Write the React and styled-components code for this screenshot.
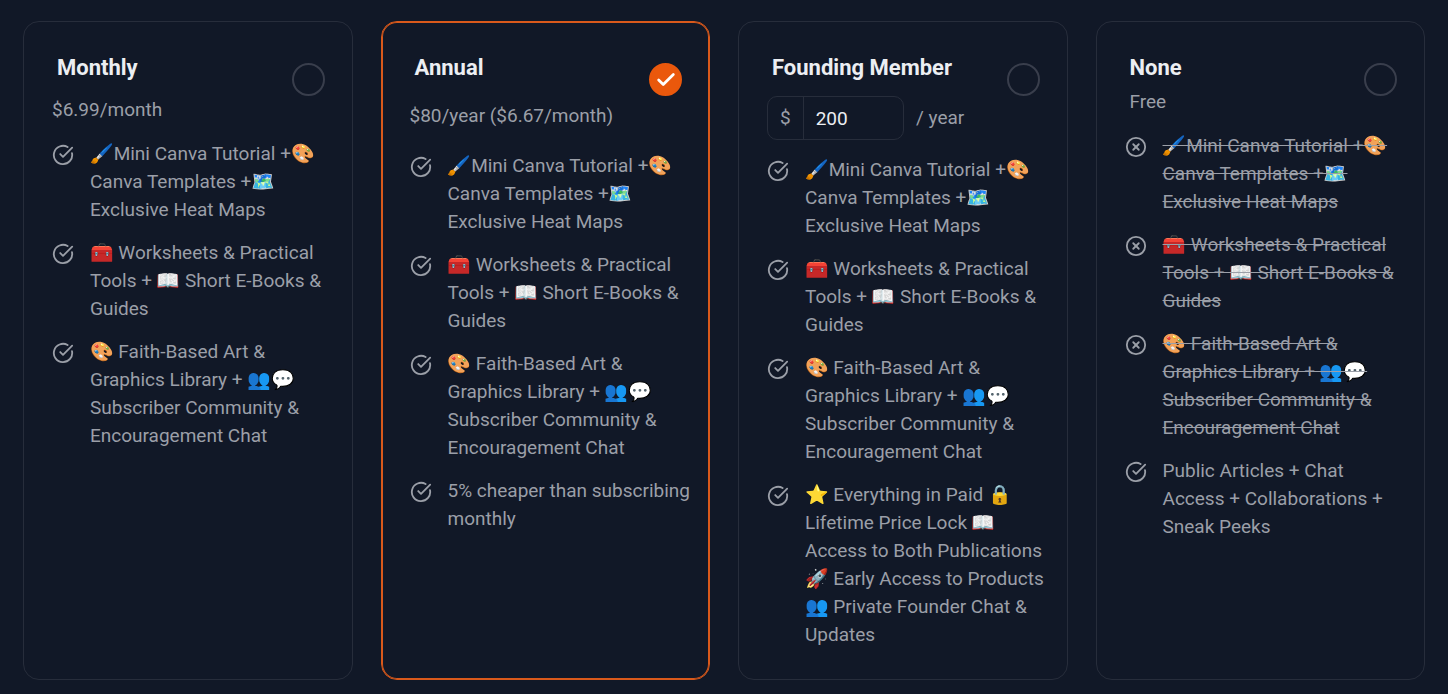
import React, { useState } from "react";
import styled, { createGlobalStyle } from "styled-components";
import { Check, CircleCheckBig, CircleX } from "lucide-react";

const SHARED = [
  "🖌️Mini Canva Tutorial +🎨 Canva Templates +🗺️ Exclusive Heat Maps",
  "🧰 Worksheets & Practical Tools + 📖 Short E-Books & Guides",
  "🎨 Faith-Based Art & Graphics Library + 👥💬 Subscriber Community & Encouragement Chat",
];

const PLANS = [
  { id: "monthly", name: "Monthly", price: "$6.99/month", features: SHARED },
  {
    id: "annual",
    name: "Annual",
    price: "$80/year ($6.67/month)",
    roomy: true,
    features: [...SHARED, "5% cheaper than subscribing monthly"],
  },
  {
    id: "founding",
    name: "Founding Member",
    custom: true,
    features: [
      ...SHARED,
      "⭐ Everything in Paid 🔒 Lifetime Price Lock 📖 Access to Both Publications 🚀 Early Access to Products 👥 Private Founder Chat & Updates",
    ],
  },
  {
    id: "none",
    name: "None",
    price: "Free",
    free: true,
    missing: SHARED,
    features: ["Public Articles + Chat Access + Collaborations + Sneak Peeks"],
  },
];

export default function App() {
  const [selected, setSelected] = useState("annual");
  const [amount, setAmount] = useState("200");

  return (
    <>
      <GlobalStyle />
      <PlanGrid>
        {PLANS.map((plan) => (
          <Card key={plan.id} $selected={selected === plan.id}>
            <Header>
              <div>
                <Title htmlFor={plan.id}>{plan.name}</Title>
                {plan.custom ? (
                  <AmountRow>
                    <AmountBox>
                      <Currency>$</Currency>
                      <AmountInput
                        aria-label="Amount per year"
                        value={amount}
                        onChange={(e) => setAmount(e.target.value)}
                      />
                    </AmountBox>
                    <span>/ year</span>
                  </AmountRow>
                ) : (
                  <Price $roomy={plan.roomy} $free={plan.free}>
                    {plan.price}
                  </Price>
                )}
              </div>
              <RadioWrap>
                <Radio
                  type="radio"
                  name="plan"
                  id={plan.id}
                  checked={selected === plan.id}
                  onChange={() => setSelected(plan.id)}
                />
                {selected === plan.id && <RadioCheck size={22} strokeWidth={3} />}
              </RadioWrap>
            </Header>
            <Features>
              {(plan.missing || []).map((text) => (
                <Feature key={text}>
                  <CircleX size={22} />
                  <Struck>{text}</Struck>
                </Feature>
              ))}
              {plan.features.map((text) => (
                <Feature key={text}>
                  <CircleCheckBig size={22} />
                  <span>{text}</span>
                </Feature>
              ))}
            </Features>
          </Card>
        ))}
      </PlanGrid>
    </>
  );
}

const GlobalStyle = createGlobalStyle`
  * {
    box-sizing: border-box;
  }

  body {
    margin: 0;
    background: #111827;
    color: #9b9fa8;
    font: 19px/28px Roboto, "Noto Color Emoji", sans-serif;
  }
`;

const PlanGrid = styled.main`
  display: grid;
  grid-template-columns: repeat(auto-fit, minmax(300px, 1fr));
  gap: 28px;
  padding: 21px 23px 14px;
`;

const Card = styled.section`
  padding: 32px 14px 30px 28px;
  border: 1px solid ${(p) => (p.$selected ? "#d9591b" : "#272d3b")};
  border-radius: 16px;
  box-shadow: ${(p) => (p.$selected ? "inset 0 0 0 1px #d9591b" : "none")};
`;

const Header = styled.div`
  display: grid;
  grid-template-columns: 1fr auto;
  align-items: start;
  padding-right: 13px;
`;

const Title = styled.label`
  display: block;
  padding-left: 5px;
  color: #eceef2;
  font-size: 22px;
  font-weight: 700;
`;

const Price = styled.div`
  margin-top: ${(p) => (p.$free ? 6 : 14)}px;
  padding: ${(p) => (p.$roomy ? "6px 0" : 0)};
  padding-left: ${(p) => (p.$free ? 5 : 0)}px;
`;

const AmountRow = styled.div`
  display: flex;
  align-items: center;
  gap: 12px;
  margin-top: 14px;
`;

const AmountBox = styled.div`
  display: flex;
  width: 137px;
  height: 44px;
  border: 1px solid #272d3b;
  border-radius: 10px;
`;

const Currency = styled.span`
  padding: 7px 12px;
  border-right: 1px solid #272d3b;
`;

const AmountInput = styled.input`
  width: 100%;
  min-width: 0;
  padding: 2px 12px 0;
  border: 0;
  outline: 0;
  background: none;
  color: #eceef2;
  font: inherit;
`;

const RadioWrap = styled.div`
  position: relative;
  display: grid;
  margin-top: 9px;
`;

const Radio = styled.input`
  appearance: none;
  width: 33px;
  height: 33px;
  margin: 0;
  border: 2px solid #393e4c;
  border-radius: 50%;

  &:checked {
    border-color: #ea580c;
    background: #ea580c;
  }
`;

const RadioCheck = styled(Check)`
  position: absolute;
  inset: 0;
  margin: auto;
  color: #fff;
  pointer-events: none;
`;

const Features = styled.ul`
  display: grid;
  gap: 15px;
  margin: 16px 0 0;
  padding: 0;
  list-style: none;
`;

const Feature = styled.li`
  display: grid;
  grid-template-columns: 22px 1fr;
  gap: 16px;

  svg {
    margin-top: 4px;
  }
`;

const Struck = styled.span`
  text-decoration: line-through;
`;
